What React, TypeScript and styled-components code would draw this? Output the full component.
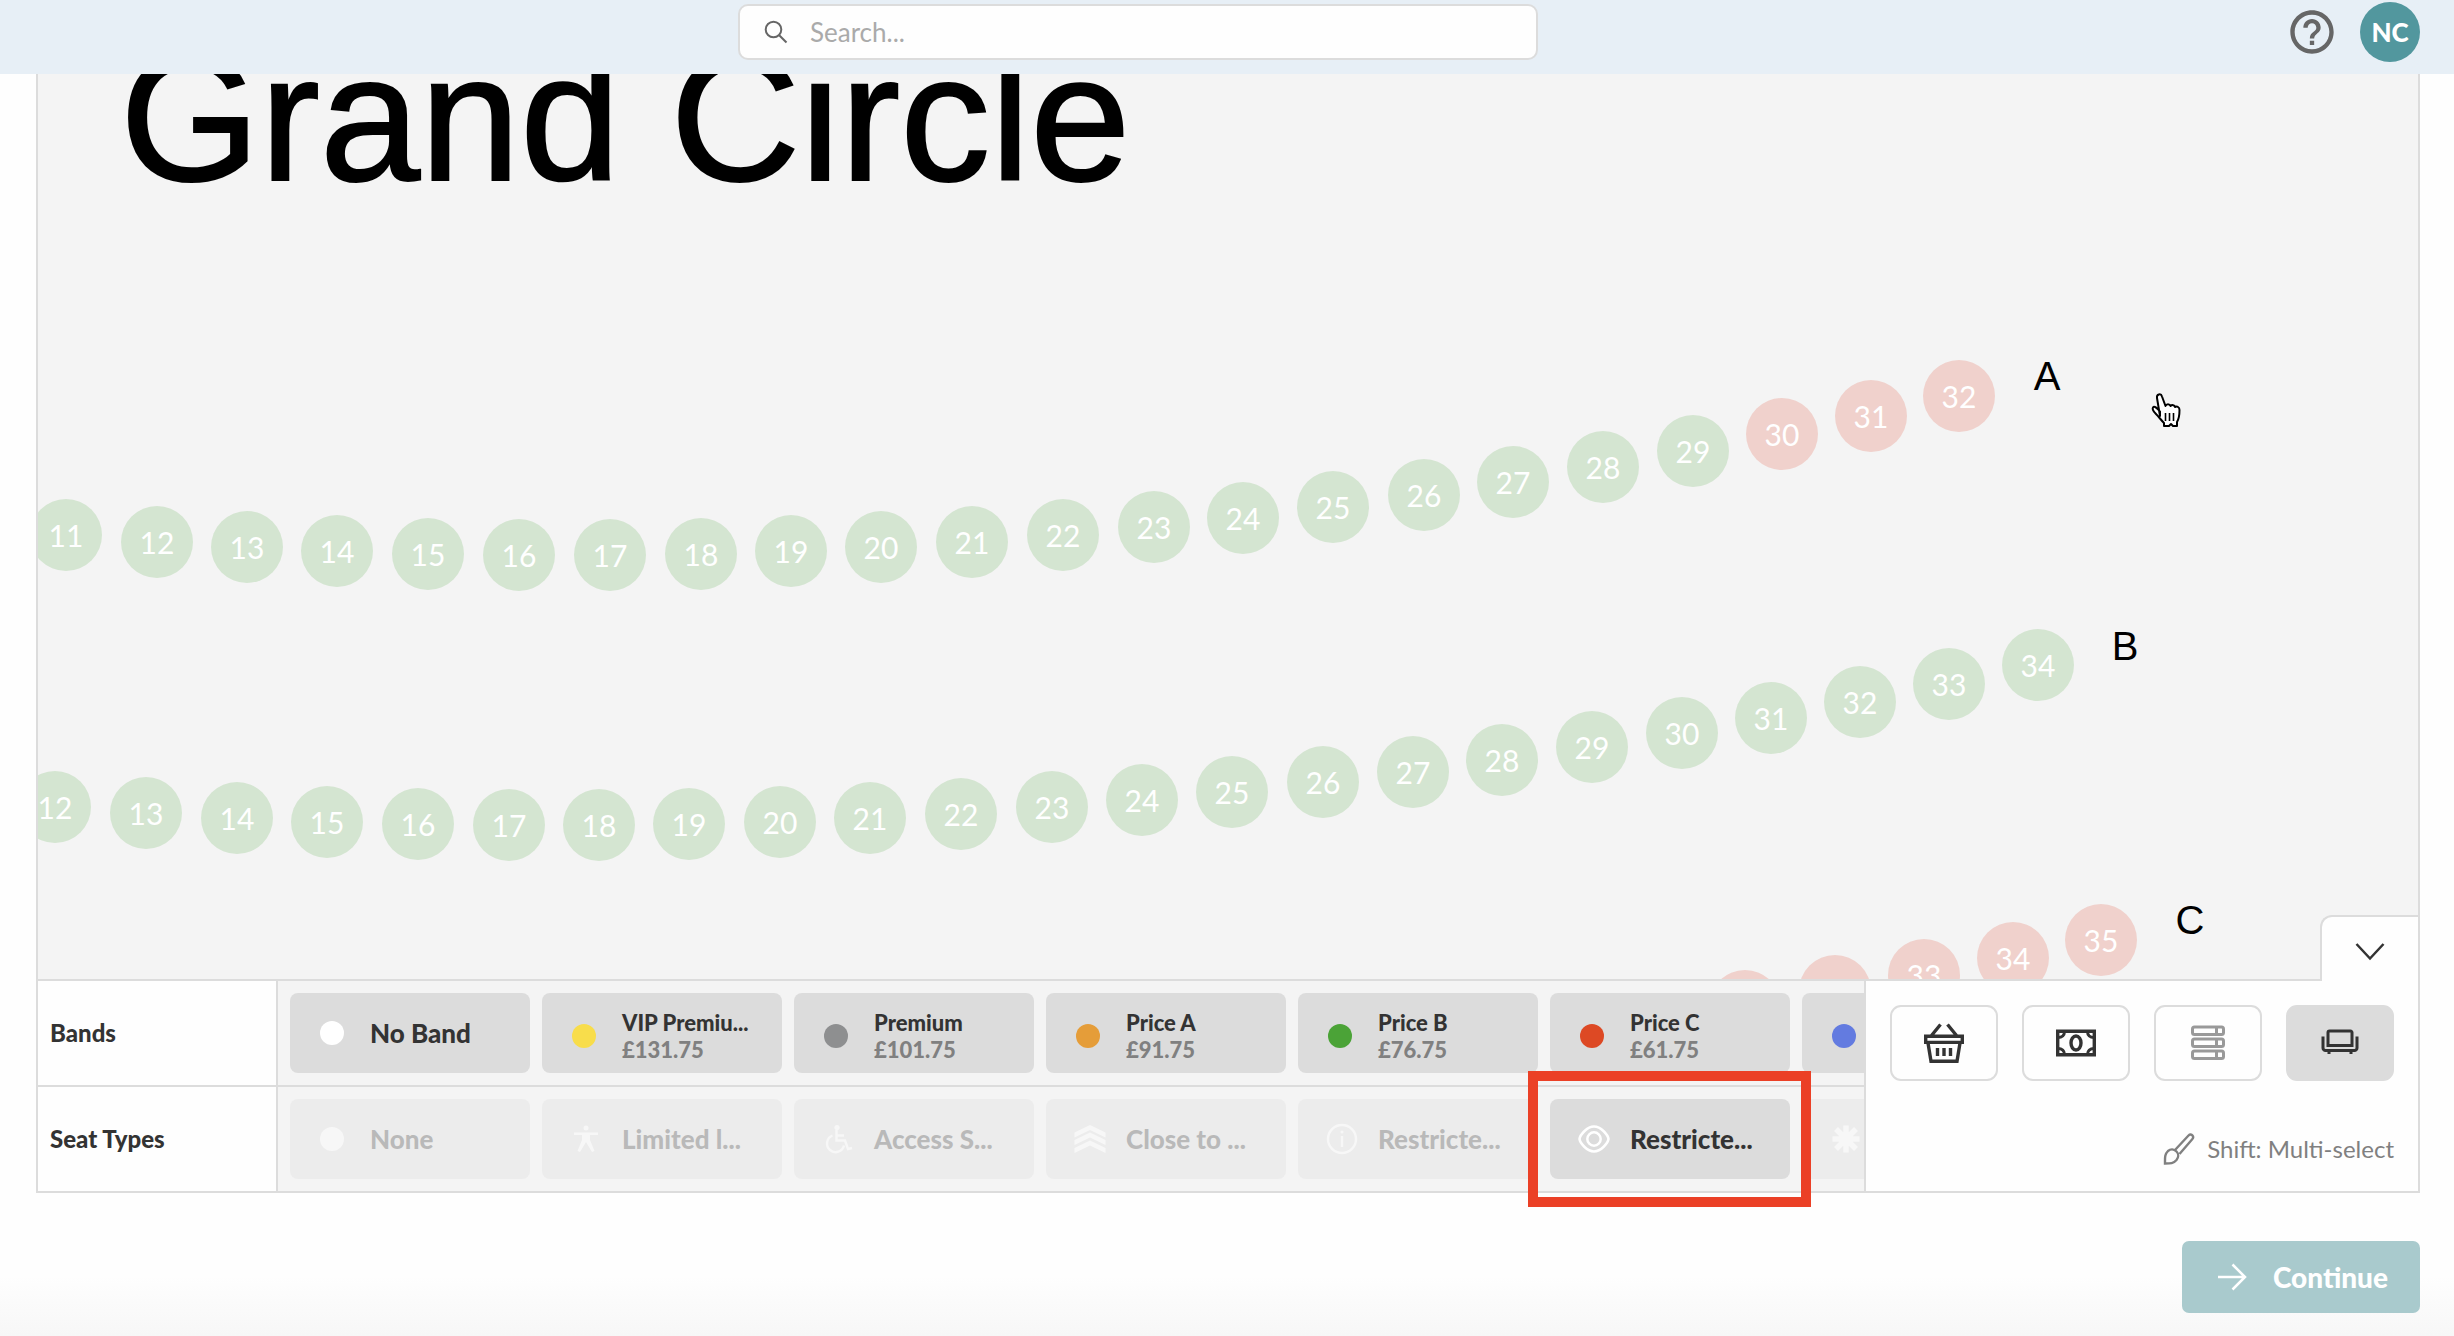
import React from "react";
import styled, { createGlobalStyle, css } from "styled-components";
import { MdHelpOutline } from "react-icons/md";

const ink = "#333333";
const line = "#dcdcdc";
const canvas = "#f4f4f4";

const GlobalStyle = createGlobalStyle`
  *, *::before, *::after { box-sizing: border-box; }
  body {
    margin: 0;
    color: ${ink};
    background: #fefefe;
    font-family: Lato, "Liberation Sans", sans-serif;
  }
  button, input { font: inherit; color: inherit; }
`;

const Page = styled.div`
  display: flex;
  flex-direction: column;
  min-height: 100vh;
  overflow: hidden;
  background: linear-gradient(to top, #f7f7f7, #fefefe 60px);
`;

const Header = styled.header`
  display: flex;
  align-items: center;
  height: 74px;
  padding-bottom: 10px;
  background: #e7eff6;
`;

const Spacer = styled.div`
  flex: 1;
`;

const SearchBox = styled.label`
  display: flex;
  align-items: center;
  gap: 22px;
  width: 800px;
  height: 56px;
  padding: 0 24px;
  border: 2px solid ${line};
  border-radius: 10px;
  background: #fefefe;
`;

const SearchInput = styled.input`
  flex: 1;
  padding: 0;
  border: 0;
  outline: 0;
  background: transparent;
  font-size: 26px;
  &::placeholder { color: #aaaaaa; opacity: 1; }
`;

const Tools = styled.div`
  display: flex;
  align-items: center;
  gap: 22px;
  padding: 0 34px 0 10px;
`;

const HelpButton = styled.button`
  display: flex;
  padding: 0;
  border: 0;
  background: none;
  color: #666666;
`;

const Avatar = styled.button`
  width: 60px;
  height: 60px;
  padding: 0;
  border: 0;
  border-radius: 50%;
  background: #52979e;
  color: #ffffff;
  font-size: 26px;
  font-weight: 900;
`;

const Main = styled.main`
  display: flex;
  flex-direction: column;
  padding: 0 34px 0 36px;
`;

const Frame = styled.section`
  border: 2px solid ${line};
  border-top: 0;
`;

const SeatMap = styled.div`
  position: relative;
  height: 905px;
  overflow: hidden;
  background: ${canvas};
`;

const MapTitle = styled.h1`
  position: absolute;
  left: 82px;
  top: -56px;
  margin: 0;
  color: #000000;
  font: 400 180px/200px "Liberation Sans", Arial, sans-serif;
  -webkit-text-stroke: 2px #000000;
  white-space: nowrap;
`;

const Seat = styled.button<{ $sold: boolean }>`
  position: absolute;
  width: 72px;
  height: 72px;
  margin: -36px 0 0 -36px;
  padding: 0;
  border: 0;
  border-radius: 50%;
  background: ${(p) => (p.$sold ? "#f0d1cc" : "#d4e5d1")};
  color: #ffffff;
  font-size: 30px;
`;

const RowLabel = styled.span`
  position: absolute;
  width: 60px;
  margin: -30px 0 0 -30px;
  color: #000000;
  font: 400 40px/60px "Liberation Sans", Arial, sans-serif;
  text-align: center;
`;

const Pointer = styled.svg`
  position: absolute;
  left: 2110px;
  top: 318px;
`;

const CollapseButton = styled.button`
  position: absolute;
  right: 0;
  bottom: 0;
  display: flex;
  align-items: center;
  justify-content: center;
  width: 98px;
  height: 64px;
  padding: 7px 0 0;
  border: solid ${line};
  border-width: 2px 0 0 2px;
  border-radius: 12px 0 0 0;
  background: #fefefe;
`;

const Panel = styled.div`
  display: grid;
  grid-template-columns: minmax(0, 1fr) auto;
`;

const Rows = styled.div`
  border-top: 2px solid ${line};
`;

const OptionRow = styled.div`
  display: grid;
  grid-template-columns: 240px minmax(0, 1fr);
  & + & { border-top: 2px solid ${line}; }
`;

const RowName = styled.h2`
  display: flex;
  align-items: center;
  margin: 0;
  padding: 0 12px;
  border-right: 2px solid ${line};
  background: #fefefe;
  font-size: 24px;
  line-height: 30px;
  font-weight: 900;
`;

const Strip = styled.div`
  display: flex;
  gap: 12px;
  padding: 12px;
  overflow: hidden;
  background: ${canvas};
`;

const Option = styled.button<{ $faded?: boolean }>`
  display: flex;
  flex: none;
  align-items: center;
  gap: 20px;
  width: 240px;
  height: 80px;
  padding: 0 12px 0 28px;
  border: 0;
  border-radius: 8px;
  background: ${line};
  text-align: left;
  ${(p) => p.$faded && css`opacity: 0.3;`}
`;

const Slot = styled.span<{ $low?: boolean }>`
  display: flex;
  flex: none;
  align-items: center;
  justify-content: center;
  width: 32px;
  padding-top: ${(p) => (p.$low ? 6 : 0)}px;
  color: #ffffff;
`;

const Dot = styled.span<{ $color: string }>`
  width: 24px;
  height: 24px;
  margin-right: 4px;
  border-radius: 50%;
  background: ${(p) => p.$color};
`;

const OptionText = styled.span`
  display: flex;
  flex-direction: column;
  padding-top: 6px;
  white-space: nowrap;
`;

const OptionTitle = styled.span`
  font-size: 26px;
  line-height: 32px;
  font-weight: 900;
`;

const BandName = styled.span`
  font-size: 22px;
  line-height: 27px;
  font-weight: 900;
`;

const Price = styled(BandName)`
  color: #808080;
`;

const Side = styled.aside`
  display: flex;
  flex-direction: column;
  justify-content: space-between;
  padding: 24px;
  border-left: 2px solid ${line};
  background: #fefefe;
`;

const SideWrap = styled.div`
  display: grid;
  grid-template-rows: 2px 1fr;
  background: #fefefe;
`;

const TopRule = styled.div`
  margin-right: 96px;
  background: ${line};
`;

const Actions = styled.div`
  display: flex;
  gap: 24px;
`;

const Action = styled.button<{ $active?: boolean; $dim?: boolean }>`
  display: flex;
  align-items: center;
  justify-content: center;
  width: 108px;
  height: 76px;
  padding: 0;
  border: 2px solid ${line};
  border-radius: 11px;
  background: ${(p) => (p.$active ? line : "#fefefe")};
  color: ${(p) => (p.$dim ? "#999999" : ink)};
`;

const Hint = styled.p`
  display: flex;
  align-items: center;
  justify-content: flex-end;
  gap: 12px;
  margin: 0;
  color: #808080;
  font-size: 24px;
  line-height: 36px;
`;

const Highlight = styled.span`
  position: absolute;
  inset: -28px -21px -28px -22px;
  border: 10px solid #eb4026;
  pointer-events: none;
`;

const HighlightAnchor = styled.div`
  position: relative;
  z-index: 1;
  flex: none;
`;

const TypeStrip = styled(Strip)`
  overflow: visible;
  clip-path: inset(-40px 0 -40px 0);
`;

const Footer = styled.footer`
  display: flex;
  justify-content: flex-end;
  padding-top: 48px;
`;

const ContinueButton = styled.button`
  display: flex;
  align-items: center;
  gap: 26px;
  height: 72px;
  padding: 0 32px 0 35px;
  border: 0;
  border-radius: 7px;
  background: #a9cacd;
  color: #ffffff;
  font-size: 28px;
  font-weight: 900;
`;

type SeatSpec = [number: number, x: number, y: number, sold?: boolean];

/* Seat centres, measured from the top left corner of the map. */
const seatRows: { name: string; at: [number, number]; seats: SeatSpec[] }[] = [
  {
    name: "A",
    at: [2009, 302],
    seats: [
      [11, 28, 461], [12, 119, 468], [13, 209, 473], [14, 299, 477], [15, 390, 480],
      [16, 481, 481], [17, 572, 481], [18, 663, 480], [19, 753, 477], [20, 843, 473],
      [21, 934, 468], [22, 1025, 461], [23, 1116, 453], [24, 1205, 444], [25, 1295, 433],
      [26, 1386, 421], [27, 1475, 408], [28, 1565, 393], [29, 1655, 377],
      [30, 1744, 360, true], [31, 1833, 342, true], [32, 1921, 322, true],
    ],
  },
  {
    name: "B",
    at: [2087, 572],
    seats: [
      [12, 17, 733], [13, 108, 739], [14, 199, 744], [15, 289, 748], [16, 380, 750],
      [17, 471, 751], [18, 561, 751], [19, 651, 750], [20, 742, 748], [21, 832, 744],
      [22, 923, 740], [23, 1014, 733], [24, 1104, 726], [25, 1194, 718], [26, 1285, 708],
      [27, 1375, 698], [28, 1464, 686], [29, 1554, 673], [30, 1644, 659], [31, 1733, 644],
      [32, 1822, 628], [33, 1911, 610], [34, 2000, 591],
    ],
  },
  {
    name: "C",
    at: [2152, 846],
    seats: [
      [31, 1707, 932, true], [32, 1797, 917, true], [33, 1886, 901, true],
      [34, 1975, 884, true], [35, 2063, 866, true],
    ],
  },
];

const bands = [
  { name: "VIP Premiu...", price: "£131.75", color: "#f8dd4b" },
  { name: "Premium", price: "£101.75", color: "#8e8f90" },
  { name: "Price A", price: "£91.75", color: "#e59d39" },
  { name: "Price B", price: "£76.75", color: "#4ba337" },
  { name: "Price C", price: "£61.75", color: "#dd4924" },
];

const PersonIcon = () => (
  <svg width="32" height="32" viewBox="0 0 32 32" fill="currentColor">
    <circle cx="16" cy="5" r="2.500" />
    <path d="M4 9.500h24V12h-8v5l4.500 11-2.500 1-6-10-6 10-2.500-1L12 17v-5H4z" />
  </svg>
);

const WheelchairIcon = () => (
  <svg width="32" height="32" viewBox="0 0 32 32" fill="none" stroke="currentColor" strokeWidth="2.400">
    <circle cx="15" cy="4.500" r="2.600" fill="currentColor" stroke="none" />
    <path d="M14.500 7v10.500h8.500l3 8.500 4-1M14.500 12.500H22" />
    <path d="M10.500 12.500a8.600 8.600 0 1 0 11.500 10" />
  </svg>
);

const RanksIcon = () => (
  <svg width="32" height="32" viewBox="0 0 32 32" fill="currentColor">
    <path d="M16 2 31.500 9.500v5L16 7 .5 14.500v-5z" />
    <path d="M16 9.500 31.500 17v5L16 14.500.5 22v-5z" />
    <path d="M16 17.500 31.500 25v5L16 22.500.5 30v-5z" />
  </svg>
);

const InfoIcon = () => (
  <svg width="32" height="32" viewBox="0 0 32 32" fill="none" stroke="currentColor" strokeWidth="2.400">
    <circle cx="16" cy="16" r="14" />
    <path d="M16 13v11" />
    <circle cx="16" cy="9" r="1.500" fill="currentColor" stroke="none" />
  </svg>
);

const EyeIcon = () => (
  <svg width="32" height="32" viewBox="0 0 32 32" fill="none" stroke="currentColor" strokeWidth="2.500">
    <path d="M1.500 16C2 12 9 3.500 16 3.500S30 12 30.500 16C30 20 23 28.500 16 28.500S2 20 1.500 16z" />
    <circle cx="16" cy="16" r="6.700" />
  </svg>
);

const BurstIcon = () => (
  <svg width="32" height="32" viewBox="0 0 32 32" stroke="currentColor" strokeWidth="5.500">
    <path d="M16 2.500v27M2.500 16h27M6 6l20 20M26 6 6 26" />
  </svg>
);

const SearchIcon = () => (
  <svg width="24" height="24" viewBox="0 0 24 24" fill="none" stroke="#666666" strokeWidth="2">
    <circle cx="9.500" cy="9.500" r="7.800" />
    <path d="m15.200 15.200 7.300 7.300" />
  </svg>
);

const ChevronIcon = () => (
  <svg width="30" height="20" viewBox="0 0 30 20" fill="none" stroke={ink} strokeWidth="2.500">
    <path d="M1.500 2 15 16.500 28.500 2" />
  </svg>
);

const BasketIcon = () => (
  <svg width="40" height="40" viewBox="0 0 40 40" fill="none" stroke="currentColor" strokeWidth="3.400">
    <path d="M1.700 13.200h36.600v6.200H1.700zM4 20l3 18.300h26L36 20M7.500 12.500 16.500 1.500M32.500 12.500 23.500 1.500" />
    <path d="M13.500 25v8M20 25v8M26.500 25v8" />
  </svg>
);

const CashIcon = () => (
  <svg width="40" height="28" viewBox="0 0 40 28" fill="none" stroke="currentColor" strokeWidth="3.400">
    <path d="M1.700 2.200h36.600v23.600H1.700z" />
    <ellipse cx="20" cy="14" rx="5" ry="7" />
    <path d="M8.500 2.500c0 3.500-2.500 6-6.500 6M31.500 2.500c0 3.500 2.500 6 6.500 6M8.500 25.500c0-3.500-2.500-6-6.500-6M31.500 25.500c0-3.500 2.500-6 6.500-6" strokeWidth="3" />
  </svg>
);

const StackIcon = () => (
  <svg width="34" height="36" viewBox="0 0 34 36" fill="none" stroke="currentColor" strokeWidth="3">
    {[2, 14, 26].map((y) => (
      <g key={y}>
        <rect x="1.500" y={y} width="31" height="7.500" rx="2" />
        <path d={`M25.500 ${y}v7.500`} />
      </g>
    ))}
  </svg>
);

const SofaIcon = () => (
  <svg width="38" height="32" viewBox="0 0 38 32" fill="none" stroke="currentColor" strokeWidth="3">
    <path d="M7 18.500v-13a1.500 1.500 0 0 1 1.500-1.500h21a1.500 1.500 0 0 1 1.500 1.500v13z" />
    <path d="M2 9.500v11.500a2.500 2.500 0 0 0 2.500 2.500h29a2.500 2.500 0 0 0 2.500-2.500V9.500M8 24v3M30 24v3" />
  </svg>
);

const BrushIcon = () => (
  <svg width="32" height="32" viewBox="0 0 32 32" fill="none" stroke="currentColor" strokeWidth="2.400">
    <path d="M12 17 25.500 2.500c1.500-1.500 3.200-1 4 0s1 2.500-.5 4L16.500 21" />
    <path d="M2 30.500c0-6-.5-9 3-12.500 2.500-2 6-2 8.500.5 2.500 2.500 2 6 0 8.500-3 3.500-6 3.500-11.500 3.500z" />
  </svg>
);

const ArrowIcon = () => (
  <svg width="30" height="28" viewBox="0 0 30 28" fill="none" stroke="currentColor" strokeWidth="2.500">
    <path d="M1 14h26M15.500 1.500 28 14 15.500 26.500" />
  </svg>
);

const HandPointer = () => (
  <Pointer width="38" height="42" viewBox="0 0 38 42" aria-hidden="true">
    <path
      d="M12 24 9 6c-.6-4 4-5 5-1.500L17.500 14c1-2.500 4-2.500 5 0 1.500-1.500 4-1 4.500 1 2-1 4.500 0 4.500 3 0 5 0 8-2.500 12v4h-4l-2-2-2 2h-5v-3c-3-3-5-6-8-9-3-3-4-5-3-6.500s3.500-.5 7 4z"
      fill="#ffffff"
      stroke="#000000"
      strokeWidth="2"
      strokeLinejoin="round"
    />
    <path d="M17.500 21v8M21.500 21v8M25.500 21v8" stroke="#000000" strokeWidth="1.600" />
  </Pointer>
);

const fadedTypes = [
  { name: "Limited l...", icon: <PersonIcon /> },
  { name: "Access S...", icon: <WheelchairIcon /> },
  { name: "Close to ...", icon: <RanksIcon /> },
  { name: "Restricte...", icon: <InfoIcon /> },
];

export default function App() {
  return (
    <Page>
      <GlobalStyle />
      <Header>
        <Spacer />
        <SearchBox>
          <SearchIcon />
          <SearchInput type="search" placeholder="Search..." aria-label="Search" />
        </SearchBox>
        <Spacer />
        <Tools>
          <HelpButton aria-label="Help">
            <MdHelpOutline size={52} />
          </HelpButton>
          <Avatar>NC</Avatar>
        </Tools>
      </Header>

      <Main>
        <Frame>
          <SeatMap>
            <MapTitle>Grand Circle</MapTitle>
            {seatRows.map((row) => (
              <React.Fragment key={row.name}>
                {row.seats.map(([n, x, y, sold]) => (
                  <Seat key={n} $sold={!!sold} style={{ left: x, top: y }}>
                    {n}
                  </Seat>
                ))}
                <RowLabel style={{ left: row.at[0], top: row.at[1] }}>{row.name}</RowLabel>
              </React.Fragment>
            ))}
            <HandPointer />
            <CollapseButton aria-label="Collapse panel">
              <ChevronIcon />
            </CollapseButton>
          </SeatMap>

          <Panel>
            <Rows>
              <OptionRow>
                <RowName>Bands</RowName>
                <Strip>
                  <Option>
                    <Slot><Dot $color="#ffffff" /></Slot>
                    <OptionTitle>No Band</OptionTitle>
                  </Option>
                  {bands.map((b) => (
                    <Option key={b.name}>
                      <Slot $low><Dot $color={b.color} /></Slot>
                      <OptionText>
                        <BandName>{b.name}</BandName>
                        <Price>{b.price}</Price>
                      </OptionText>
                    </Option>
                  ))}
                  <Option aria-label="Next band">
                    <Slot $low><Dot $color="#637be0" /></Slot>
                  </Option>
                </Strip>
              </OptionRow>
              <OptionRow>
                <RowName>Seat Types</RowName>
                <TypeStrip>
                  <Option $faded>
                    <Slot><Dot $color="#ffffff" /></Slot>
                    <OptionTitle>None</OptionTitle>
                  </Option>
                  {fadedTypes.map((t) => (
                    <Option key={t.name} $faded>
                      <Slot>{t.icon}</Slot>
                      <OptionTitle>{t.name}</OptionTitle>
                    </Option>
                  ))}
                  <HighlightAnchor>
                    <Option>
                      <Slot><EyeIcon /></Slot>
                      <OptionTitle>Restricte...</OptionTitle>
                    </Option>
                    <Highlight />
                  </HighlightAnchor>
                  <Option $faded aria-label="Other">
                    <Slot><BurstIcon /></Slot>
                  </Option>
                </TypeStrip>
              </OptionRow>
            </Rows>
            <SideWrap>
              <TopRule />
              <Side>
                <Actions>
                  <Action aria-label="Basket"><BasketIcon /></Action>
                  <Action aria-label="Prices"><CashIcon /></Action>
                  <Action aria-label="Rows" $dim><StackIcon /></Action>
                  <Action aria-label="Seats" $active><SofaIcon /></Action>
                </Actions>
                <Hint>
                  <BrushIcon />
                  Shift: Multi-select
                </Hint>
              </Side>
            </SideWrap>
          </Panel>
        </Frame>

        <Footer>
          <ContinueButton>
            <ArrowIcon />
            Continue
          </ContinueButton>
        </Footer>
      </Main>
    </Page>
  );
}
